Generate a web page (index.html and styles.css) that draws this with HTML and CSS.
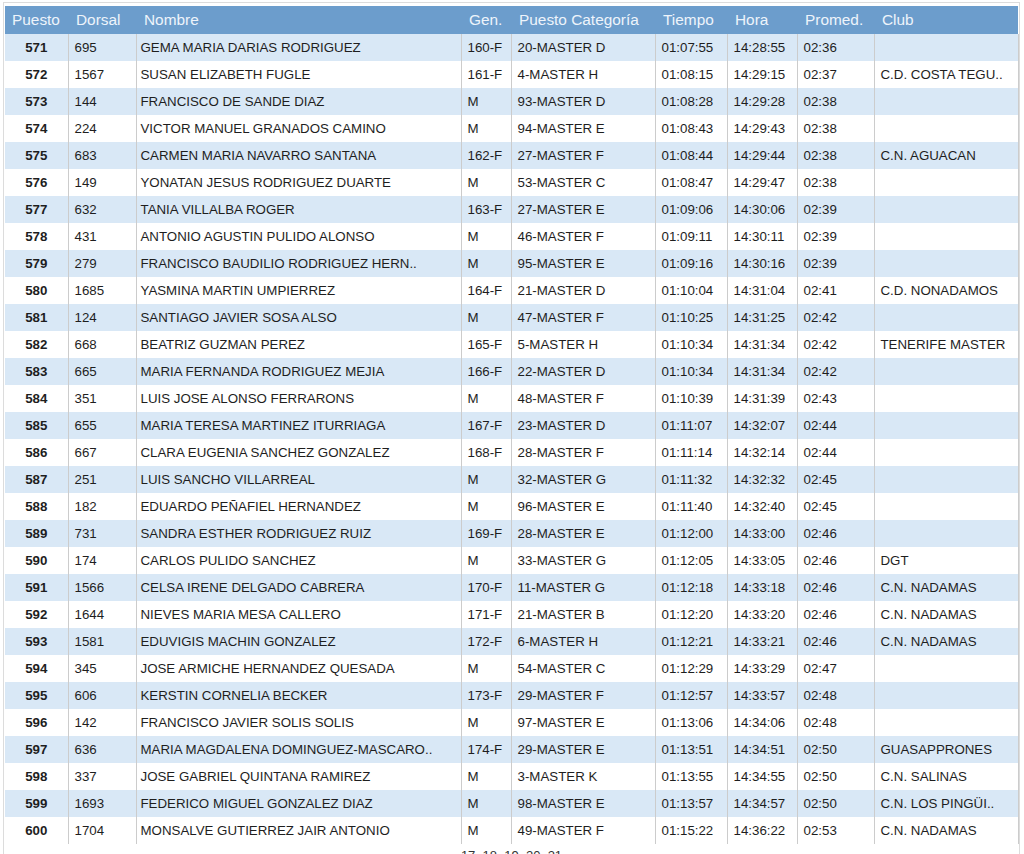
FILE: index.html
```html
<!DOCTYPE html>
<html lang="es">
<head>
<meta charset="utf-8">
<title>Clasificación</title>
<link rel="stylesheet" href="styles.css">
</head>
<body>
<div class="panel">
<table class="results">
<colgroup>
<col class="c-pos"><col class="c-dor"><col class="c-nom"><col class="c-gen"><col class="c-cat"><col class="c-tie"><col class="c-hor"><col class="c-pro"><col class="c-club">
</colgroup>
<thead>
<tr><th class="th-pos">Puesto</th><th>Dorsal</th><th>Nombre</th><th>Gen.</th><th>Puesto Categoría</th><th>Tiempo</th><th>Hora</th><th>Promed.</th><th>Club</th></tr>
</thead>
<tbody>
<tr><td class="pos">571</td><td>695</td><td class="nom">GEMA MARIA DARIAS RODRIGUEZ</td><td>160-F</td><td>20-MASTER D</td><td>01:07:55</td><td>14:28:55</td><td>02:36</td><td></td></tr>
<tr><td class="pos">572</td><td>1567</td><td class="nom">SUSAN ELIZABETH FUGLE</td><td>161-F</td><td>4-MASTER H</td><td>01:08:15</td><td>14:29:15</td><td>02:37</td><td>C.D. COSTA TEGU..</td></tr>
<tr><td class="pos">573</td><td>144</td><td class="nom">FRANCISCO DE SANDE DIAZ</td><td>M</td><td>93-MASTER D</td><td>01:08:28</td><td>14:29:28</td><td>02:38</td><td></td></tr>
<tr><td class="pos">574</td><td>224</td><td class="nom">VICTOR MANUEL GRANADOS CAMINO</td><td>M</td><td>94-MASTER E</td><td>01:08:43</td><td>14:29:43</td><td>02:38</td><td></td></tr>
<tr><td class="pos">575</td><td>683</td><td class="nom">CARMEN MARIA NAVARRO SANTANA</td><td>162-F</td><td>27-MASTER F</td><td>01:08:44</td><td>14:29:44</td><td>02:38</td><td>C.N. AGUACAN</td></tr>
<tr><td class="pos">576</td><td>149</td><td class="nom">YONATAN JESUS RODRIGUEZ DUARTE</td><td>M</td><td>53-MASTER C</td><td>01:08:47</td><td>14:29:47</td><td>02:38</td><td></td></tr>
<tr><td class="pos">577</td><td>632</td><td class="nom">TANIA VILLALBA ROGER</td><td>163-F</td><td>27-MASTER E</td><td>01:09:06</td><td>14:30:06</td><td>02:39</td><td></td></tr>
<tr><td class="pos">578</td><td>431</td><td class="nom">ANTONIO AGUSTIN PULIDO ALONSO</td><td>M</td><td>46-MASTER F</td><td>01:09:11</td><td>14:30:11</td><td>02:39</td><td></td></tr>
<tr><td class="pos">579</td><td>279</td><td class="nom">FRANCISCO BAUDILIO RODRIGUEZ HERN..</td><td>M</td><td>95-MASTER E</td><td>01:09:16</td><td>14:30:16</td><td>02:39</td><td></td></tr>
<tr><td class="pos">580</td><td>1685</td><td class="nom">YASMINA MARTIN UMPIERREZ</td><td>164-F</td><td>21-MASTER D</td><td>01:10:04</td><td>14:31:04</td><td>02:41</td><td>C.D. NONADAMOS</td></tr>
<tr><td class="pos">581</td><td>124</td><td class="nom">SANTIAGO JAVIER SOSA ALSO</td><td>M</td><td>47-MASTER F</td><td>01:10:25</td><td>14:31:25</td><td>02:42</td><td></td></tr>
<tr><td class="pos">582</td><td>668</td><td class="nom">BEATRIZ GUZMAN PEREZ</td><td>165-F</td><td>5-MASTER H</td><td>01:10:34</td><td>14:31:34</td><td>02:42</td><td>TENERIFE MASTER</td></tr>
<tr><td class="pos">583</td><td>665</td><td class="nom">MARIA FERNANDA RODRIGUEZ MEJIA</td><td>166-F</td><td>22-MASTER D</td><td>01:10:34</td><td>14:31:34</td><td>02:42</td><td></td></tr>
<tr><td class="pos">584</td><td>351</td><td class="nom">LUIS JOSE ALONSO FERRARONS</td><td>M</td><td>48-MASTER F</td><td>01:10:39</td><td>14:31:39</td><td>02:43</td><td></td></tr>
<tr><td class="pos">585</td><td>655</td><td class="nom">MARIA TERESA MARTINEZ ITURRIAGA</td><td>167-F</td><td>23-MASTER D</td><td>01:11:07</td><td>14:32:07</td><td>02:44</td><td></td></tr>
<tr><td class="pos">586</td><td>667</td><td class="nom">CLARA EUGENIA SANCHEZ GONZALEZ</td><td>168-F</td><td>28-MASTER F</td><td>01:11:14</td><td>14:32:14</td><td>02:44</td><td></td></tr>
<tr><td class="pos">587</td><td>251</td><td class="nom">LUIS SANCHO VILLARREAL</td><td>M</td><td>32-MASTER G</td><td>01:11:32</td><td>14:32:32</td><td>02:45</td><td></td></tr>
<tr><td class="pos">588</td><td>182</td><td class="nom">EDUARDO PEÑAFIEL HERNANDEZ</td><td>M</td><td>96-MASTER E</td><td>01:11:40</td><td>14:32:40</td><td>02:45</td><td></td></tr>
<tr><td class="pos">589</td><td>731</td><td class="nom">SANDRA ESTHER RODRIGUEZ RUIZ</td><td>169-F</td><td>28-MASTER E</td><td>01:12:00</td><td>14:33:00</td><td>02:46</td><td></td></tr>
<tr><td class="pos">590</td><td>174</td><td class="nom">CARLOS PULIDO SANCHEZ</td><td>M</td><td>33-MASTER G</td><td>01:12:05</td><td>14:33:05</td><td>02:46</td><td>DGT</td></tr>
<tr><td class="pos">591</td><td>1566</td><td class="nom">CELSA IRENE DELGADO CABRERA</td><td>170-F</td><td>11-MASTER G</td><td>01:12:18</td><td>14:33:18</td><td>02:46</td><td>C.N. NADAMAS</td></tr>
<tr><td class="pos">592</td><td>1644</td><td class="nom">NIEVES MARIA MESA CALLERO</td><td>171-F</td><td>21-MASTER B</td><td>01:12:20</td><td>14:33:20</td><td>02:46</td><td>C.N. NADAMAS</td></tr>
<tr><td class="pos">593</td><td>1581</td><td class="nom">EDUVIGIS MACHIN GONZALEZ</td><td>172-F</td><td>6-MASTER H</td><td>01:12:21</td><td>14:33:21</td><td>02:46</td><td>C.N. NADAMAS</td></tr>
<tr><td class="pos">594</td><td>345</td><td class="nom">JOSE ARMICHE HERNANDEZ QUESADA</td><td>M</td><td>54-MASTER C</td><td>01:12:29</td><td>14:33:29</td><td>02:47</td><td></td></tr>
<tr><td class="pos">595</td><td>606</td><td class="nom">KERSTIN CORNELIA BECKER</td><td>173-F</td><td>29-MASTER F</td><td>01:12:57</td><td>14:33:57</td><td>02:48</td><td></td></tr>
<tr><td class="pos">596</td><td>142</td><td class="nom">FRANCISCO JAVIER SOLIS SOLIS</td><td>M</td><td>97-MASTER E</td><td>01:13:06</td><td>14:34:06</td><td>02:48</td><td></td></tr>
<tr><td class="pos">597</td><td>636</td><td class="nom">MARIA MAGDALENA DOMINGUEZ-MASCARO..</td><td>174-F</td><td>29-MASTER E</td><td>01:13:51</td><td>14:34:51</td><td>02:50</td><td>GUASAPPRONES</td></tr>
<tr><td class="pos">598</td><td>337</td><td class="nom">JOSE GABRIEL QUINTANA RAMIREZ</td><td>M</td><td>3-MASTER K</td><td>01:13:55</td><td>14:34:55</td><td>02:50</td><td>C.N. SALINAS</td></tr>
<tr><td class="pos">599</td><td>1693</td><td class="nom">FEDERICO MIGUEL GONZALEZ DIAZ</td><td>M</td><td>98-MASTER E</td><td>01:13:57</td><td>14:34:57</td><td>02:50</td><td>C.N. LOS PINGÜI..</td></tr>
<tr><td class="pos">600</td><td>1704</td><td class="nom">MONSALVE GUTIERREZ JAIR ANTONIO</td><td>M</td><td>49-MASTER F</td><td>01:15:22</td><td>14:36:22</td><td>02:53</td><td>C.N. NADAMAS</td></tr>
</tbody>
</table>
<div class="pager">17 &nbsp;18 &nbsp;19 &nbsp;20 &nbsp;21</div>
</div>
</body>
</html>
```

FILE: styles.css
```css
html, body {
  margin: 0;
  padding: 0;
  background: #ffffff;
}
body {
  font-family: "Liberation Sans", Arial, sans-serif;
  color: #1e1e1e;
}
.panel {
  margin: 2px 4px 0 3px;
  border: 1px solid #dcdcdc;
  border-bottom: none;
  padding: 3px 1px 0 1px;
}
.results {
  width: 1013px;
  border-collapse: collapse;
  table-layout: fixed;
  font-size: 13.3px;
}
.c-pos { width: 63px; }
.c-dor { width: 68px; }
.c-nom { width: 325px; }
.c-gen { width: 50px; }
.c-cat { width: 144px; }
.c-tie { width: 72px; }
.c-hor { width: 70px; }
.c-pro { width: 77px; }
.c-club { width: 144px; }
.results th {
  background: #6c9dcc;
  color: #eef4fb;
  font-weight: normal;
  font-size: 15.4px;
  text-align: left;
  height: 28px;
  padding: 0 0 0 8px;
  white-space: nowrap;
  overflow: hidden;
}
.results th.th-pos {
  padding-left: 7px;
}
.results td {
  height: 27px;
  padding: 0 0 0 6px;
  border-left: 1px solid #cccccc;
  white-space: nowrap;
  overflow: hidden;
  box-sizing: border-box;
}
.results td.nom {
  padding-left: 4px;
}
.results td:first-child {
  border-left: none;
}
.results td:last-child {
  border-right: 1px solid #cccccc;
}
.results tbody tr:nth-child(odd) td {
  background: #d9e8f6;
}
.results tbody tr:nth-child(even) td {
  background: #ffffff;
}
.results td.pos {
  font-weight: bold;
  text-align: center;
  padding: 0;
}
.pager {
  text-align: center;
  font-size: 13px;
  color: #333333;
  padding-top: 4px;
  height: 20px;
}
```
